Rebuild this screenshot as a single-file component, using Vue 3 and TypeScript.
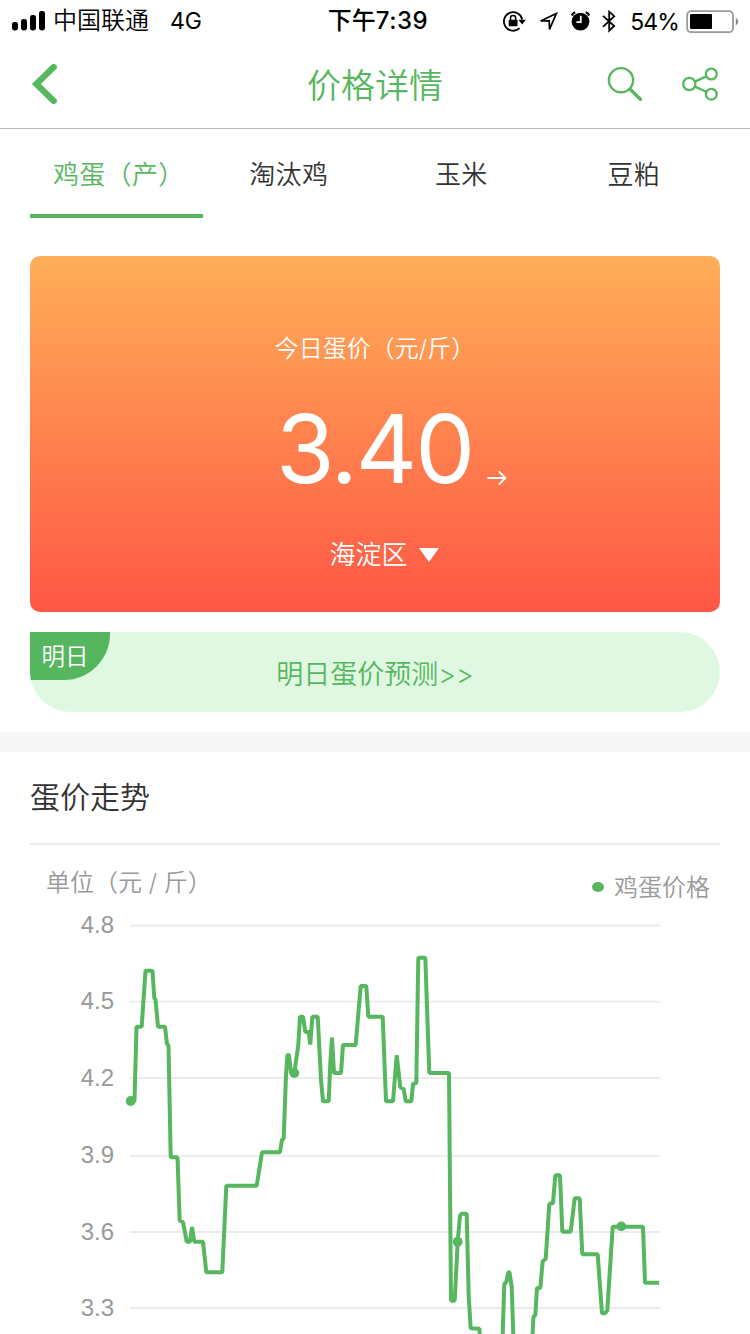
<script setup lang="ts">
interface Tab {
  label: string
  active: boolean
}

interface Tick {
  label: string
  y: number
}

type Point = [number, number]

const tabs: Tab[] = [
  { label: '鸡蛋（产）', active: true },
  { label: '淘汰鸡', active: false },
  { label: '玉米', active: false },
  { label: '豆粕', active: false },
]

const ticks: Tick[] = [
  { label: '4.8', y: 925.5 },
  { label: '4.5', y: 1001.7 },
  { label: '4.2', y: 1078 },
  { label: '3.9', y: 1155.8 },
  { label: '3.6', y: 1232 },
  { label: '3.3', y: 1308 },
]

const series: Point[] = [
  [130.5, 1101], [134.5, 1101], [136.5, 1026.7], [141.7, 1026.7], [145.5, 970.7], [152.5, 970.7],
  [154.3, 998], [155.5, 999.5], [158, 1026.7], [165, 1026.7], [167, 1044], [168.5, 1045.5],
  [170.7, 1157.3], [177.5, 1157.3], [179.7, 1220.7], [183, 1222], [186.7, 1241.7], [190, 1241.7],
  [192, 1227], [194.3, 1241.7], [203, 1241.7], [206.3, 1272.3], [222.3, 1272.3], [226.3, 1185.7],
  [256.7, 1185.7], [262, 1152.3], [280, 1152.3], [282, 1139.7], [283.7, 1138.5], [286, 1075],
  [287.5, 1055], [289, 1055], [291, 1072.7], [294.3, 1073], [298.3, 1045], [300, 1016.7],
  [303, 1016.7], [305.3, 1032], [308.7, 1032], [310.3, 1044.5], [312.3, 1016.7], [317.7, 1016.7],
  [321, 1080], [323, 1101.3], [328.7, 1101.3], [330.3, 1063], [332, 1037.7], [334, 1073],
  [341, 1073], [343, 1045], [355.7, 1045], [360.7, 986], [366.3, 986], [368.3, 1016.7],
  [382.7, 1016.7], [386, 1101.3], [393, 1101.3], [396.7, 1055.3], [400.3, 1087.3], [403.7, 1089],
  [405.7, 1101.3], [411.3, 1101.3], [413, 1084], [416.3, 1083], [418.3, 957.7], [425.3, 957.7],
  [429.3, 1073], [449, 1073], [451, 1300.7], [454.7, 1300.7], [457.7, 1241.7], [460, 1215.5],
  [461.7, 1213.7], [466.7, 1213.7], [468.7, 1296.7], [470.7, 1328.3], [479.5, 1328.7], [481, 1370],
  [501.5, 1370], [504.3, 1284], [506.3, 1282], [508.3, 1272.3], [509.5, 1272.3], [511.7, 1287],
  [514.5, 1370], [530.5, 1370], [533.5, 1316.7], [535.3, 1315], [537, 1288], [540.3, 1288],
  [542.7, 1261.3], [545.7, 1259], [549.3, 1204], [553, 1203], [555.3, 1175.3], [560, 1175.3],
  [562.3, 1231.7], [570.7, 1231.7], [574.7, 1198.3], [579.7, 1198.3], [582.3, 1254.3],
  [597.7, 1254.3], [602, 1313.3], [605, 1313.3], [607.3, 1310.5], [612.7, 1226.7], [643, 1226.7],
  [645, 1282.7], [659, 1282.7],
]

const linePoints: string = series.map((p) => p.join(',')).join(' ')

const markers: Point[] = [
  [130.7, 1101],
  [294.3, 1073],
  [457.7, 1241.7],
  [621.3, 1226.4],
]
</script>

<template>
  <div class="page">
    <header class="status">
      <div class="status-left">
        <svg class="signal" width="34" height="22" viewBox="0 0 34 22">
          <rect x="0" y="12" width="6" height="8.5" rx="2.4" />
          <rect x="9" y="9" width="6" height="11.5" rx="2.4" />
          <rect x="18" y="5" width="6" height="15.5" rx="2.4" />
          <rect x="27" y="1" width="6" height="19.5" rx="2.4" />
        </svg>
        <span class="carrier">中国联通</span>
        <span class="network">4G</span>
      </div>
      <div class="clock">下午<b>7:39</b></div>
      <div class="status-right">
        <svg width="246" height="30" viewBox="500 5 246 30">
          <path d="M519.6 27.2A9.3 9.3 0 1 1 522.3 18.5" fill="none" stroke="#000" stroke-width="1.8" />
          <path d="M518.4 18.8H525.8L522.2 23.4Z" />
          <rect x="508.7" y="18.7" width="8.8" height="6.6" rx="0.8" />
          <path d="M510.5 19V17a2.6 2.6 0 0 1 5.2 0v2" fill="none" stroke="#000" stroke-width="1.5" />
          <path d="M556.3 12.6L540.6 19.9H549.2L549.5 28.4Z" fill="none" stroke="#000" stroke-width="1.7" stroke-linejoin="miter" />
          <circle cx="580.5" cy="20.6" r="8.9" />
          <path d="M580.8 14.8V21.2H576.5" fill="none" stroke="#fff" stroke-width="1.7" />
          <path d="M571.7 14.5Q572.7 12.3 575.2 11.3M585.8 11.3Q588.3 12.3 589.3 14.5" fill="none" stroke="#000" stroke-width="2.2" />
          <path d="M603 14.8L614.2 25L609.2 29.7V10.7L614.2 15.2L603 25.8" fill="none" stroke="#000" stroke-width="1.8" />
          <text x="630.3" y="28.9" class="battery-text" textLength="49.5">54%</text>
          <rect x="687.2" y="10.2" width="45.8" height="21" rx="4" fill="none" stroke="#999" stroke-width="1.8" />
          <rect x="690" y="13" width="22" height="15" rx="1" />
          <path d="M735.8 16.8Q741 20.6 735.8 24.6Z" fill="#888" />
        </svg>
      </div>
    </header>

    <nav class="nav">
      <svg class="back" width="30" height="44" viewBox="30 62 30 44">
        <path d="M53.7 67.1L36.4 84L53.7 100.9" fill="none" stroke="#56b75f" stroke-width="6.3" stroke-linecap="round" />
      </svg>
      <h1>价格详情</h1>
      <svg class="actions" width="116" height="40" viewBox="604 64 116 40" fill="none" stroke="#56b75f">
        <circle cx="621" cy="80.2" r="12.1" stroke-width="2.4" />
        <path d="M630.2 89.2L640.5 99.2" stroke-width="3.4" stroke-linecap="round" />
        <g stroke-width="2.3">
          <circle cx="689.3" cy="84" r="6.1" />
          <circle cx="711.3" cy="74" r="5.4" />
          <circle cx="711.3" cy="94.2" r="5.4" />
          <path d="M694.9 81.6L706.3 76.4M694.9 86.6L706.3 91.7" />
        </g>
      </svg>
    </nav>

    <div class="tabs">
      <div v-for="tab in tabs" :key="tab.label" class="tab" :class="{ active: tab.active }">{{ tab.label }}</div>
    </div>

    <section class="price-card">
      <div class="price-title">今日蛋价（元/斤）</div>
      <div class="price-row">
        <span class="price">3.40</span>
        <svg width="22" height="18" viewBox="0 0 22 18">
          <path d="M0.5 9H18.2M11.8 2.3L18.4 9L11.8 15.7" fill="none" stroke="#fff" stroke-width="1.9" />
        </svg>
      </div>
      <div class="region">
        <span>海淀区</span>
        <svg width="20" height="14" viewBox="0 0 20 14"><path d="M0 0H20L10 14Z" fill="#fff" /></svg>
      </div>
    </section>

    <section class="forecast">
      <span class="badge">明日</span>
      <span class="forecast-text">明日蛋价预测&gt;&gt;</span>
    </section>

    <div class="divider"></div>

    <h2>蛋价走势</h2>

    <div class="chart-head">
      <span class="unit">单位（元 / 斤）</span>
      <span class="legend"><i></i><span>鸡蛋价格</span></span>
    </div>

    <svg class="chart" width="750" height="429" viewBox="0 905 750 429">
      <g v-for="tick in ticks" :key="tick.label">
        <line x1="130" x2="660" :y1="tick.y" :y2="tick.y" stroke="#ebebeb" stroke-width="1.8" />
        <text x="114" :y="tick.y + 7.5" text-anchor="end" class="tick">{{ tick.label }}</text>
      </g>
      <polyline :points="linePoints" fill="none" stroke="#56b75f" stroke-width="4" stroke-linejoin="bevel" />
      <circle v-for="m in markers" :key="m[0]" :cx="m[0]" :cy="m[1]" r="4.9" fill="#56b75f" />
    </svg>
  </div>
</template>

<style>
html,
body {
  margin: 0;
  background: #fff;
}
</style>

<style scoped>
.page {
  width: 750px;
  height: 1334px;
  overflow: hidden;
  background: #fff;
  color: #333;
  font-family: Inter, "Noto Sans CJK SC", sans-serif;
  font-weight: 350;
}

.status {
  display: grid;
  grid-template-columns: 250px 250px 250px;
  align-items: center;
  height: 40px;
  color: #000;
}

.status-left {
  display: flex;
  align-items: center;
  padding-left: 12px;
  font-size: 24px;
  line-height: 42px;
}

.carrier {
  margin-left: 7px;
}

.network {
  margin-left: 21px;
  font-size: 23px;
  font-weight: 400;
}

.clock {
  font-size: 24px;
  line-height: 42px;
  font-weight: 500;
  text-align: center;
  padding-left: 6px;
}

.clock b {
  font-size: 24px;
  font-weight: 500;
  letter-spacing: 0.5px;
}

.status-right svg {
  display: block;
}

.battery-text {
  font-size: 23px;
  font-weight: 400;
}

.nav {
  display: flex;
  align-items: center;
  justify-content: space-between;
  box-sizing: border-box;
  height: 89px;
  padding: 0 30px;
  border-bottom: 1px solid #b9b9b9;
}

.back {
  margin-right: 86px;
}

h1 {
  margin: 0;
  padding-top: 3px;
  color: #56b75f;
  font-size: 34px;
  font-weight: 350;
  line-height: 48px;
}

.tabs {
  display: grid;
  grid-template-columns: repeat(4, 1fr);
  margin: 0 30px;
}

.tab {
  height: 85px;
  border-bottom: 4px solid transparent;
  font-size: 26px;
  line-height: 91px;
  letter-spacing: 0.3px;
  text-align: center;
}

.tab.active {
  border-color: #56b75f;
  color: #56b75f;
  text-indent: 5px;
}

.price-card {
  display: flex;
  flex-direction: column;
  align-items: center;
  box-sizing: border-box;
  height: 356px;
  margin: 38px 30px 0;
  padding-top: 73px;
  border-radius: 10px;
  background: linear-gradient(#ffae58, #ff5745);
  color: #fff;
}

.price-title {
  font-size: 24px;
  line-height: 40px;
}

.price-row {
  display: flex;
  align-items: flex-end;
  height: 115px;
  padding-left: 35px;
}

.price-row svg {
  margin: 0 0 -3px 14px;
}

.price {
  font-size: 95px;
  font-weight: 380;
  line-height: 70px;
  letter-spacing: -2px;
}

.region {
  display: flex;
  align-items: center;
  gap: 11px;
  margin-top: 51px;
  padding-left: 18px;
  font-size: 26px;
  line-height: 40px;
}

.forecast {
  position: relative;
  height: 80px;
  margin: 20px 30px;
  overflow: hidden;
  border-radius: 0 40px 40px 40px;
  background: #e0f8e2;
  text-align: center;
}

.badge {
  position: absolute;
  left: 0;
  top: 0;
  box-sizing: border-box;
  width: 80px;
  height: 48px;
  padding-right: 10px;
  border-radius: 0 0 46px 0;
  background: #56b55f;
  color: #fff;
  font-size: 23.5px;
  line-height: 50px;
}

.forecast-text {
  color: #56b75f;
  font-size: 27px;
  line-height: 85px;
}

.divider {
  height: 20px;
  background: #f7f7f7;
}

h2 {
  height: 91px;
  margin: 0 30px;
  border-bottom: 2px solid #ebebeb;
  font-size: 30px;
  font-weight: 350;
  line-height: 90px;
}

.chart-head {
  display: flex;
  justify-content: space-between;
  height: 60px;
  padding: 0 40px 0 46px;
  color: #999;
  font-size: 24px;
}

.unit {
  line-height: 76px;
}

.legend {
  display: flex;
  align-items: center;
  height: 84px;
}

.legend span {
  padding-bottom: 3px;
}

.legend i {
  width: 12px;
  height: 10px;
  margin-right: 10px;
  border-radius: 50%;
  background: #56b75f;
}

.chart {
  display: block;
}

.tick {
  fill: #999;
  font: 24px "Liberation Sans", sans-serif;
}
</style>
